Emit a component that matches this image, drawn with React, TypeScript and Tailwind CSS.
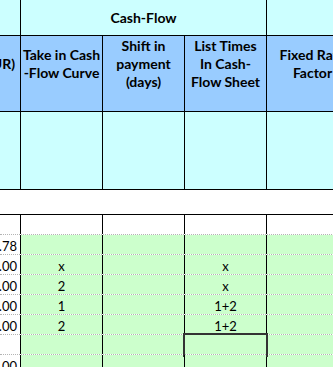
import React from 'react';

const grid = 'grid grid-cols-[20px_82px_82px_82px_92px]';

interface DataRow {
  amount: string;
  take: string;
  list: string;
}

const rows: DataRow[] = [
  { amount: '.78', take: '', list: '' },
  { amount: '.00', take: 'x', list: 'x' },
  { amount: '.00', take: '2', list: 'x' },
  { amount: '.00', take: '1', list: '1+2' },
  { amount: '.00', take: '2', list: '1+2' },
  { amount: '', take: '', list: '' },
  { amount: '.00', take: '', list: '' },
];

const HeadCell: React.FC<{ lines: string[]; className?: string }> = ({ lines, className = '' }) => (
  <div className={`flex flex-col items-center justify-center pb-[20px] text-center leading-[18px] border-l border-black ${className}`}>
    {lines.map(l => (
      <span key={l} className="whitespace-nowrap">{l}</span>
    ))}
  </div>
);

export default function App() {
  return (
    <div
      className="w-[333px] h-[367px] overflow-hidden bg-white text-black"
      style={{ fontFamily: 'Lato, "Liberation Sans", sans-serif' }}
    >
      <div className="w-[358px]">
        {/* group header */}
        <div className={`${grid} h-[36px] border-b border-black bg-[#ccffff] text-[14px] font-bold`}>
          <div />
          <div className="col-span-3 flex items-center justify-center border-l border-black">Cash-Flow</div>
          <div className="border-l border-black" />
        </div>

        {/* column headers */}
        <div className={`${grid} h-[76px] border-b border-black bg-[#99ccff] text-[14px] font-bold`}>
          <div className="flex items-center justify-end overflow-hidden pb-[20px] pr-[5px]">
            <span className="whitespace-nowrap">(EUR)</span>
          </div>
          <HeadCell lines={['Take in Cash', '-Flow Curve']} />
          <HeadCell lines={['Shift in', 'payment', '(days)']} />
          <HeadCell lines={['List Times', 'In Cash-', 'Flow Sheet']} />
          <HeadCell lines={['Fixed Rate', 'Factor']} />
        </div>

        {/* empty description row */}
        <div className={`${grid} h-[78px] border-b border-black bg-[#ccffff]`}>
          <div />
          <div className="border-l border-black" />
          <div className="border-l border-black" />
          <div className="border-l border-black" />
          <div className="border-l border-black" />
        </div>

        {/* spacer */}
        <div className="h-[25px] border-b border-black" />

        <div className={`${grid} h-[20px] border-b border-dotted border-[#b4b4b4]`}>
          <div />
          <div className="border-l border-black" />
          <div className="border-l border-black" />
          <div className="border-l border-black" />
          <div className="border-l border-black" />
        </div>

        {rows.map((r, i) => (
          <div
            key={i}
            className={`${grid} h-[20px] border-b border-dotted border-[#b4b4b4] text-[13px] leading-[16px]`}
          >
            <div className="flex items-end justify-end overflow-hidden bg-white pr-[3px]">
              <span className="whitespace-nowrap">{r.amount}</span>
            </div>
            <div className="flex items-end justify-center border-l border-black bg-[#ccffcc]">{r.take}</div>
            <div className="border-l border-black bg-[#ccffcc]" />
            <div className="relative flex items-end justify-center border-l border-black bg-[#ccffcc]">
              {r.list}
              {i === 5 && (
                <div className="absolute left-[-2px] top-[-2px] h-[24px] w-[85px] border-2 border-[#333333]" />
              )}
            </div>
            <div className="border-l border-black bg-[#ccffcc]" />
          </div>
        ))}
      </div>
    </div>
  );
}
